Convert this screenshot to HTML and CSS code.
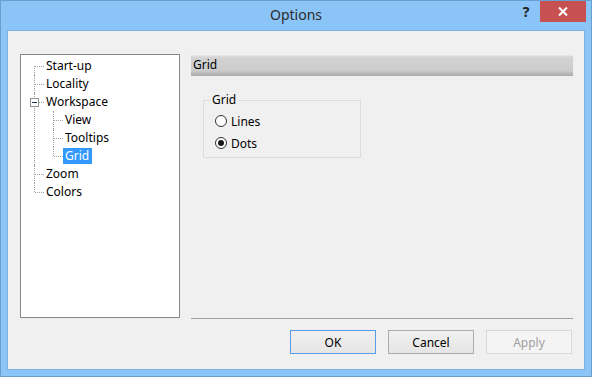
FILE: index.html
```html
<!DOCTYPE html>
<html lang="en">
<head>
    <meta charset="UTF-8">
    <title>Options</title>
    <link rel="stylesheet" href="styles.css">
</head>
<body>
<div class="window">
    <!-- Barra de título -->
    <div class="titlebar">
        <div></div>
        <div class="title">Options</div>
        <div class="controls">
            <span class="help">?</span>
            <span class="close">
                <svg width="10" height="9" viewBox="0 0 10 9">
                    <path d="M1 0.5 L9 8.5 M9 0.5 L1 8.5" stroke="#fff" stroke-width="2"/>
                </svg>
            </span>
        </div>
    </div>

    <div class="client">
        <div class="main">
            <!-- Árvore de categorias -->
            <div class="tree">
                <ul class="tree-root">
                    <li><span class="label">Start-up</span></li>
                    <li><span class="label">Locality</span></li>
                    <li>
                        <span class="toggle"></span>
                        <span class="label">Workspace</span>
                        <ul>
                            <li><span class="label">View</span></li>
                            <li><span class="label">Tooltips</span></li>
                            <li><span class="label selected">Grid</span></li>
                        </ul>
                    </li>
                    <li><span class="label">Zoom</span></li>
                    <li><span class="label">Colors</span></li>
                </ul>
            </div>

            <!-- Página de opções -->
            <div class="page">
                <div class="page-header">Grid</div>
                <fieldset class="group">
                    <legend>Grid</legend>
                    <label class="radio"><span class="dot"></span>Lines</label>
                    <label class="radio"><span class="dot checked"></span>Dots</label>
                </fieldset>
            </div>
        </div>

        <div class="buttons">
            <button class="default">OK</button>
            <button>Cancel</button>
            <button disabled>Apply</button>
        </div>
    </div>
</div>
</body>
</html>
```

FILE: styles.css
```css
body {
    margin: 0;
    font-family: "Noto Sans", "Open Sans", sans-serif;
    font-size: 12px;
    color: #000;
}

.window {
    width: 592px;
    height: 377px;
    box-sizing: border-box;
    border: 1px solid #6a9fd2;
    background-color: #8bc5f7;
    display: flex;
    flex-direction: column;
}

.titlebar {
    height: 29px;
    display: grid;
    grid-template-columns: 1fr auto 1fr;
    align-items: center;
}

.title {
    font-size: 14px;
    color: #2b2b2b;
    line-height: 20px;
    padding-bottom: 2px;
}

.controls {
    align-self: start;
    display: flex;
    justify-content: flex-end;
    margin-right: 5px;
}

.help {
    width: 28px;
    height: 21px;
    line-height: 21px;
    text-align: center;
    font-size: 14px;
    font-weight: bold;
    color: #222;
}

.close {
    width: 46px;
    height: 21px;
    background-color: #c75050;
    display: flex;
    align-items: center;
    justify-content: center;
}

.client {
    flex: 1;
    margin: 0 6px 6px;
    border: 1px solid #7db2e3;
    background-color: #f0f0f0;
    padding: 23px 11px 0 12px;
}

.main {
    display: flex;
    align-items: flex-start;
    gap: 11px;
}

/* Árvore */
.tree {
    width: 160px;
    height: 264px;
    box-sizing: border-box;
    border: 1px solid #828790;
    background-color: #fff;
}

.tree ul {
    list-style: none;
    margin: 0;
    padding: 0 0 0 19px;
}

.tree ul.tree-root {
    padding: 2px 0 0 23px;
}

.tree li {
    position: relative;
}

.tree li::before {
    content: '';
    position: absolute;
    left: -9px;
    top: 9px;
    width: 9px;
    border-top: 1px dotted #a0a0a0;
}

.tree li::after {
    content: '';
    position: absolute;
    left: -10px;
    top: 0;
    bottom: 0;
    border-left: 1px dotted #a0a0a0;
}

.tree li:last-child::after {
    bottom: auto;
    height: 9px;
}

.tree-root > li:first-child::after {
    top: 9px;
    bottom: 0;
    height: auto;
}

.label {
    display: block;
    width: fit-content;
    line-height: 16px;
    border-top: 1px solid transparent;
    border-bottom: 1px solid transparent;
    background-clip: padding-box;
    padding: 0 3px 0 2px;
}

.label.selected {
    background-color: #3399ff;
    color: #fff;
}

.toggle {
    position: absolute;
    left: -14px;
    top: 5px;
    width: 9px;
    height: 9px;
    box-sizing: border-box;
    border: 1px solid #919191;
    background-color: #fff;
    z-index: 1;
}

.toggle::after {
    content: '';
    position: absolute;
    left: 1px;
    top: 3px;
    width: 5px;
    height: 1px;
    background-color: #1e395b;
}

/* Página */
.page {
    flex: 1;
    height: 265px;
    box-sizing: border-box;
    border-bottom: 1px solid #a0a0a0;
}

.page-header {
    height: 22px;
    line-height: 22px;
    padding-left: 2px;
    background: linear-gradient(#f6f6f6 0, #d4d4d4 14%, #cbcbcb 75%, #a9a9a9 100%);
}

.group {
    width: 158px;
    box-sizing: border-box;
    margin: 16px 0 0 12px;
    padding: 2px 0 3px 11px;
    border: 1px solid #dcdcdc;
}

.group legend {
    margin-left: -5px;
    padding: 0 2px;
    line-height: 16px;
}

.radio {
    display: flex;
    align-items: center;
    height: 22px;
    gap: 4px;
}

.dot {
    width: 12px;
    height: 12px;
    box-sizing: border-box;
    border: 1px solid #333;
    border-radius: 50%;
    background-color: #fff;
    display: flex;
    align-items: center;
    justify-content: center;
}

.dot.checked::after {
    content: '';
    width: 6px;
    height: 6px;
    border-radius: 50%;
    background-color: #1a1a1a;
}

/* Botões */
.buttons {
    display: flex;
    justify-content: flex-end;
    gap: 12px;
    margin-top: 11px;
    margin-right: 1px;
}

button {
    width: 86px;
    height: 24px;
    font-family: inherit;
    font-size: 12px;
    color: #000;
    border: 1px solid #acacac;
    background: linear-gradient(#f0f0f0, #e5e5e5);
    padding: 0;
}

button.default {
    border-color: #569de5;
}

button:disabled {
    border-color: #d9d9d9;
    background: #f4f4f4;
    color: #a0a0a0;
}
```
